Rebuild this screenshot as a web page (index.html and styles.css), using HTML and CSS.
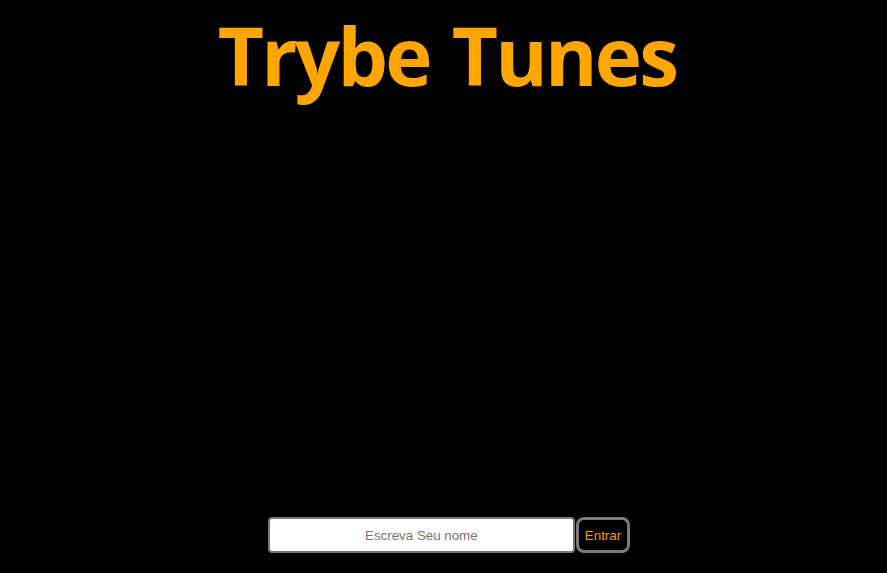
FILE: index.html
```html
<!DOCTYPE html>
<html lang="pt-BR">
<head>
<meta charset="utf-8">
<title>Trybe Tunes</title>
<link rel="stylesheet" href="styles.css">
</head>
<body>
<div class="page">
  <h1 class="title">Trybe Tunes</h1>
  <form class="login">
    <input class="name-input" type="text" placeholder="Escreva Seu nome">
    <button class="enter-btn" type="button">Entrar</button>
  </form>
</div>
</body>
</html>
```

FILE: styles.css
```css
html, body {
  margin: 0;
  padding: 0;
  background: #000;
}
.page {
  box-sizing: border-box;
  height: 573px;
  padding-left: 11px;
  display: flex;
  flex-direction: column;
  align-items: center;
  justify-content: space-between;
}
.title {
  margin: 7px 4px 0 0;
  font-family: "Open Sans", sans-serif;
  font-weight: 700;
  font-size: 80px;
  line-height: 96px;
  color: #ffa500;
  letter-spacing: -2.8px;
  word-spacing: 4px;
}
.login {
  display: flex;
  align-items: center;
  gap: 1px;
  margin-bottom: 20px;
}
.name-input {
  box-sizing: border-box;
  width: 307px;
  height: 36px;
  border: 2px solid #767676;
  border-radius: 4px;
  background: #fff;
  text-align: center;
  font-family: "Liberation Sans", Arial, sans-serif;
  font-size: 13.33px;
  padding: 0 4px;
}
.name-input::placeholder {
  color: #757575;
}
.enter-btn {
  box-sizing: border-box;
  height: 36px;
  padding: 0 6px;
  background: #000;
  color: #ff9800;
  border: 3px solid #7a7a7a;
  border-radius: 8px;
  font-family: "Liberation Sans", Arial, sans-serif;
  font-size: 13.33px;
}
```
